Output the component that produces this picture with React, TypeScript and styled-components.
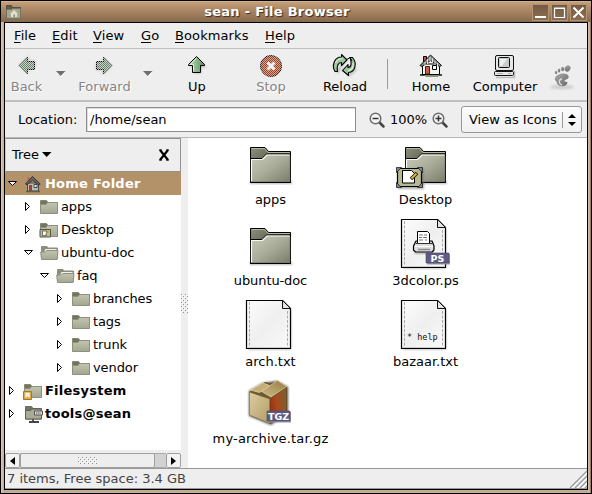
import React from "react";
import styled, { createGlobalStyle } from "styled-components";

const Global = createGlobalStyle`
  * { box-sizing: border-box; }
  html, body { margin: 0; padding: 0; overflow: hidden; }
  body { font: 13px/16px "DejaVu Sans", sans-serif; color: #000; }
  svg { display: block; flex: none; overflow: visible; }
`;

const Window = styled.div`
  width: 592px; height: 494px;
  display: flex; flex-direction: column;
  border: 1px solid #000;
  background: linear-gradient(90deg, #e3cbb6 0, #cdb299 2px, #c9ae93 3px, transparent 3px calc(100% - 3px), #d5bda6 calc(100% - 3px), #c5a88a calc(100% - 1px), #6d5338 100%), #c3ab90;
`;
const TitleBar = styled.header`
  height: 21px; flex: none;
  display: flex; align-items: center;
  padding: 1px 4px 0 5px;
  background: linear-gradient(#e2bf9c 0, #c49f7a 1px, #b6926e 5px, #977556 16px, #856a4d 21px);
`;
const Title = styled.h1`
  flex: 1; margin: 0; padding: 0;
  font-size: 13px; line-height: 18px; font-weight: bold; text-align: center; letter-spacing: .27px;
  color: #fff; text-shadow: 1px 1px 1px #3b2a1a;
`;
const Controls = styled.div` display: flex; gap: 2px; `;
const ControlButton = styled.button`
  width: 17px; height: 17px; padding: 0; display: grid; place-items: center;
  border: 1px solid #b39472; background: linear-gradient(#745b43, #8b6e51);
`;
const Client = styled.div`
  flex: 1; min-height: 0; margin: 0 3px 3px 3px;
  border: 1px solid #000;
  display: flex; flex-direction: column;
  background: #eee;
`;
const MenuBar = styled.nav`
  height: 26px; flex: none; display: flex; align-items: center;
  padding: 0 0 0 9px; gap: 16px; border-bottom: 1px solid #bebebe;
`;
const MenuItem = styled.span<{ $w: number }>`
  width: ${p => p.$w}px; white-space: nowrap; letter-spacing: .1px;
`;
const Mnemonic = styled.span` text-decoration: underline 1px; text-underline-offset: 2px; `;
const ToolBar = styled.div`
  height: 53px; flex: none; display: flex; border-bottom: 2px solid #bfbfbf;
`;
const Tool = styled.div<{ $w: number; $off?: boolean }>`
  width: ${p => p.$w}px; flex: none;
  display: flex; flex-direction: column; align-items: center;
  padding-top: 4px; white-space: nowrap;
  color: ${p => (p.$off ? "#858585" : "#000")};
  text-shadow: ${p => (p.$off ? "1px 1px 0 #fff" : "none")};
`;
const ToolLabel = styled.span` margin-top: 1px; `;
const DropCell = styled.div<{ $w: number }>`
  width: ${p => p.$w}px; flex: none; display: flex; justify-content: center; padding-top: 22px;
`;
const Separator = styled.div`
  width: 1px; height: 30px; margin: 10px 6px 0 5px; background: #9b9b9b;
`;
const Throbber = styled.div` width: 40px; padding-top: 15px; display: flex; justify-content: center; `;

const LocationBar = styled.div`
  height: 36px; flex: none; display: flex; align-items: center;
  padding-left: 13px; border-bottom: 1px solid #b8b8b8;
`;
const LocationLabel = styled.label` width: 68px; `;
const LocationInput = styled.div`
  width: 270px; height: 25px; margin-right: 13px; padding: 0 3px; line-height: 23px;
  background: #fff; border: 1px solid #8e8e8e; box-shadow: inset 1px 1px 0 #ddd;
`;
const ZoomText = styled.span` width: 37px; margin: 0 5px; white-space: nowrap; `;
const ViewSelect = styled.div`
  width: 121px; height: 27px; margin-left: 13px; padding-left: 7px;
  display: flex; align-items: center; white-space: nowrap;
  border: 1px solid #989898; border-radius: 3px; background: linear-gradient(#fcfcfc, #f1f1f1);
`;
const SelectText = styled.span` width: 93px; `;
const SelectRule = styled.i` width: 1px; height: 16px; background: #999; margin-right: 5px; `;

const Content = styled.div` flex: 1; min-height: 0; display: flex; `;
const SidePane = styled.aside`
  width: 176px; flex: none; display: flex; flex-direction: column; background: #fff;
`;
const PaneHeader = styled.div`
  height: 34px; flex: none; display: flex; align-items: center;
  padding: 0 10px 0 6px; background: #eee;
  border: 1px solid #929292; border-left-color: #c8c8c8;
`;
const PaneTitle = styled.span` margin-right: 3px; `;
const Spacer = styled.span` flex: 1; `;
const Tree = styled.div` flex: 1; `;
const TreeRow = styled.div<{ $depth: number; $selected?: boolean; $bold?: boolean }>`
  height: 23px; display: flex; align-items: center; white-space: nowrap;
  padding-left: ${p => 2 + p.$depth * 16}px;
  background: ${p => (p.$selected ? "#b39169" : "transparent")};
  color: ${p => (p.$selected ? "#fff" : "#000")};
  font-weight: ${p => (p.$bold ? "bold" : "normal")};
  letter-spacing: ${p => (p.$bold ? ".24px" : "-.1px")};
`;
const TreeIcon = styled.span` width: 20px; margin: 0 1px 0 6px; `;
const ScrollBar = styled.div`
  height: 18px; flex: none; padding-top: 3px; display: flex; background: #eee;
`;
const ScrollButton = styled.div`
  width: 15px; height: 15px; display: grid; place-items: center;
  border: 1px solid #a0a0a0; border-radius: 2px; background: #f3f3f3;
`;
const ScrollTrack = styled.div`
  flex: 1; background: #d2d2d2; border: solid #aaa; border-width: 1px 0;
`;
const ScrollThumb = styled.div`
  width: 135px; height: 15px; margin-top: -1px; display: grid; place-items: center;
  border: 1px solid #a0a0a0; border-radius: 2px; background: #eee;
`;
const Divider = styled.div`
  width: 7px; display: flex; align-items: center; justify-content: center; background: #eee;
`;
const Files = styled.main`
  flex: 1; background: #fff; padding-left: 5px;
  display: grid; grid-template-columns: 155px 155px; grid-template-rows: 81px 81px 77px 77px;
`;
const FileItem = styled.figure`
  margin: 0; display: flex; flex-direction: column; align-items: center; white-space: nowrap;
`;
const FileName = styled.figcaption<{ $track: number }>`
  line-height: 17px; letter-spacing: ${p => p.$track}px;
`;
const StatusBar = styled.footer`
  height: 21px; flex: none; display: flex; justify-content: space-between; align-items: center;
  padding-left: 2px; color: #444; border: solid #999; border-width: 1px 0;
`;
const Resources = styled.svg` position: absolute; `;

const Defs = () => (
  <Resources width="0" height="0">
    <defs>
      <linearGradient id="front" x1="0" y1="0" x2="1" y2="1">
        <stop offset="0" stopColor="#cbcdb9" /><stop offset=".5" stopColor="#a9ac98" /><stop offset="1" stopColor="#797b68" />
      </linearGradient>
      <linearGradient id="tab" x1="0" y1="0" x2=".6" y2=".6">
        <stop offset="0" stopColor="#8e917c" /><stop offset="1" stopColor="#4c4e3c" />
      </linearGradient>
      <linearGradient id="small" x1="0" y1="0" x2="0" y2="1">
        <stop offset="0" stopColor="#c3c5b0" /><stop offset="1" stopColor="#a3a691" />
      </linearGradient>
      <linearGradient id="green" x1="0" y1="0" x2="1" y2="0">
        <stop offset="0" stopColor="#b9deb8" /><stop offset="1" stopColor="#5e8e60" />
      </linearGradient>
      <linearGradient id="paper" x1="0" y1="0" x2="1" y2="1">
        <stop offset="0" stopColor="#fdfdfd" /><stop offset=".5" stopColor="#efefef" /><stop offset="1" stopColor="#fafafa" />
      </linearGradient>
      <linearGradient id="boxL" x1="0" y1="0" x2="1" y2="1">
        <stop offset="0" stopColor="#dccda0" /><stop offset="1" stopColor="#b29c65" />
      </linearGradient>
      <linearGradient id="boxR" x1="0" y1=".6" x2="1" y2=".2">
        <stop offset="0" stopColor="#9c2f10" /><stop offset=".4" stopColor="#a84a1c" /><stop offset="1" stopColor="#7a6030" />
      </linearGradient>
      <linearGradient id="flap" x1="0" y1="1" x2=".8" y2="0">
        <stop offset="0" stopColor="#d0bd88" /><stop offset="1" stopColor="#9a8148" />
      </linearGradient>
      <linearGradient id="foot" x1="0" y1="0" x2="1" y2="1">
        <stop offset="0" stopColor="#aaa" /><stop offset="1" stopColor="#686868" />
      </linearGradient>
      <pattern id="dither" width="2" height="2" patternUnits="userSpaceOnUse">
        <path d="M0 0h1v1H0zM1 1h1v1H1z" fill="#ededed" />
      </pattern>
      <pattern id="grip" width="4" height="4" patternUnits="userSpaceOnUse">
        <path d="M0 0h1v1H0zM2 2h1v1H2z" fill="#909090" /><path d="M1 1h1v1H1zM3 3h1v1H3z" fill="#fff" />
      </pattern>
      <filter id="soft" x="-30%" y="-30%" width="160%" height="160%"><feGaussianBlur stdDeviation="1" /></filter>
    </defs>
  </Resources>
);

const Arrow = ({ turn, off }: { turn: number; off?: boolean }) => (
  <svg width={off ? 25 : 26} height="25" viewBox={off ? "0 0 25 25" : "0 1 26 25"}>
    <g transform={`rotate(${turn} 12.5 12.5)`}>
      <path d="M13.5 5.5 21.5 13.5V15.5H17.5V21.5H10.5V15.5H5.5z" fill="#999" opacity=".5" filter="url(#soft)" />
      <path d="M12.5 4.5 20.5 12.500V13.500H16.500V20.500H8.500V13.500H4.500V12.500z" fill={off ? "#66806a" : "url(#green)"} stroke="#000" />
      {!off && <path d="M12.500 6 6.500 12.500H9.500V19.500" fill="none" stroke="#dcf0d9" />}
    </g>
    {off && <path d="M3 3H22V22H3z" fill="url(#dither)" opacity=".75" />}
  </svg>
);
const StopIcon = () => (
  <svg width="26" height="25" viewBox="0 0 26 25">
    <circle cx="13" cy="13" r="10.500" fill="#a83f1c" stroke="#111" />
    <path d="M1 1h24v24H1z" fill="url(#dither)" opacity=".6" />
    <path d="m9.500 9.500 7 7M16.500 9.500l-7 7" stroke="#f2f2f2" strokeWidth="3" />
  </svg>
);
const ReloadIcon = () => (
  <svg width="26" height="25" viewBox="0 0 26 25">
    <path d="M5 20 12 9M16 23 24 16" stroke="#999" strokeWidth="3" opacity=".5" filter="url(#soft)" />
    <g stroke="#000" strokeWidth="1.1" fill="#9cc79b" strokeLinejoin="round">
      <path d="M5.500 18.500H3C-.5 13 2 4 9.500 4V1.500L15 7 9.500 12.500V9.500C6 9.500 4.500 13 5.500 18.500z" />
      <path d="M18 4.500h2.500c4.500 5 3.500 14.500-4 15V22.500L10.500 17.500 16 11.500v3c3.500 0 4-5 2-10z" />
      <path d="M3.500 10C4.500 7.500 7 5.500 10.500 5.500M21 10c.5 4-1.500 7-5 8" stroke="#e1f3df" fill="none" />
    </g>
    <path d="m14 7 4-2.500L20 8" stroke="#000" fill="none" />
  </svg>
);
const HomeIcon = () => (
  <svg width="26" height="25" viewBox="0 0 26 25">
    <path d="M2 22H24" stroke="#3f5535" strokeWidth="2" /><path d="M5 21l3 3h12l2-3" fill="#859675" />
    <path d="M5.500 3.500h3V9h-3z" fill="#bd5540" stroke="#000" />
    <path d="M4.500 11h17v10.500h-17z" fill="#f4f4f4" stroke="#000" />
    <path d="M12.500 2 2 12.500l2 1 8.500-6 9 6 2-1z" fill="#888" stroke="#111" />
    <path d="M12 4v4M9.500 6v5M7 9v3M14.500 5v5M17 8v4M19.500 10v3" stroke="#e0e0e0" />
    <path d="M7.500 13.500h4V21h-4z" fill="#c85f48" stroke="#3b211b" /><path d="M14.500 12.500h4v4h-4z" fill="#fff" stroke="#000" />
  </svg>
);
const ComputerIcon = () => (
  <svg width="26" height="25" viewBox="0 0 26 25">
    <path d="M4 24.500H22.500V18" stroke="#bbb" strokeWidth="1.500" fill="none" />
    <rect x="3.500" y="2.500" width="18" height="15" rx="1.500" fill="#e8e8e6" stroke="#111" />
    <rect x="6.500" y="4.500" width="11" height="10" rx="1" fill="#c8cccd" stroke="#111" />
    <path d="M8 6h7l-5 7H8z" fill="#eef0f1" />
    <rect x="2.500" y="18.500" width="19" height="4" rx="1" fill="#e7e7e5" stroke="#111" />
    <path d="M5 20.500h6M16 20.500h3" stroke="#aaa" />
  </svg>
);
const FootIcon = () => (
  <svg width="26" height="26" viewBox="0 0 26 26">
    <ellipse cx="13" cy="23" rx="12" ry="2.500" fill="#d0d0d0" filter="url(#soft)" />
    <g fill="url(#foot)">
      <ellipse cx="18.500" cy="4.500" rx="2.700" ry="3.300" transform="rotate(40 18.500 4.500)" />
      <ellipse cx="13.500" cy="5" rx="1.500" ry="2.200" /><ellipse cx="10" cy="6.500" rx="1.300" ry="2" /><ellipse cx="7" cy="8.500" rx="1.200" ry="1.700" />
      <path d="M6 14C8 9 18 8 19.500 12c1 4-4 3-4 5 0 1 3 0 3 2-1 4-9.500 5-11-1-1-2-2.500-2-1.500-4z" />
    </g>
    <path d="M13 15c-3 0-4 5 0 6" stroke="#ddd" strokeWidth="1.300" fill="none" />
  </svg>
);
const Magnifier = ({ plus }: { plus?: boolean }) => (
  <svg width="16" height="16" viewBox="0 0 16 16">
    <path d="m10.500 10.500 4 4" stroke="#444" strokeWidth="2.500" strokeLinecap="round" />
    <circle cx="6.500" cy="6.500" r="5.300" fill="#f5f5f5" stroke="#6d6d6d" strokeWidth="1.500" />
    <path d={plus ? "M3.500 6.500h6M6.500 3.500v6" : "M3.500 6.500h6"} stroke="#333" strokeWidth="1.500" />
  </svg>
);
const Drop = () => (
  <svg width="10" height="6"><path d="M1 1h9L5.500 6z" fill="#fff" /><path d="M0 0h9.500L4.700 5z" fill="#6f6f6f" /></svg>
);

const Expander = ({ open }: { open?: boolean }) => (
  <svg width="11" height="11" viewBox="0 0 11 11">
    <path d={open ? "M1.500 3.500h8L5.500 7.500z" : "M2.500 1.500v8L6.500 5.500z"} fill="#fff" stroke="#000" />
  </svg>
);

type Kind = "home" | "folder" | "desktop" | "open" | "disk" | "server";
const SmallIcon = ({ kind }: { kind: Kind }) => {
  if (kind === "home")
    return (
      <svg width="18" height="18" viewBox="0 0 18 18">
        <path d="M3.500 2h2v4h-2z" fill="#d35f51" /><path d="M3.500 8h11v8h-11z" fill="#b9b9b5" stroke="#4b4b44" />
        <path d="M8.500 1.500 1.500 9l1.500.8 5.500-4.500 6 4.500 1.700-.8z" fill="#666" stroke="#34342e" />
        <path d="M5 10h3v6H5z" fill="#a63c33" /><path d="M10 9.500h3v3h-3z" fill="#eee" stroke="#444" />
        <path d="M2 16.500h14" stroke="#596149" strokeWidth="1.500" />
      </svg>
    );
  if (kind === "open")
    return (
      <svg width="19" height="18" viewBox="0 0 19 18">
        <path d="M1.500 14V2.500h5.500l1 1.500h9.500v10z" fill="#8b8d79" stroke="#8b8d79" />
        <path d="M5.500 5h11v3H4z" fill="#f1f1ed" />
        <path d="M.7 8h4.500l1.500-1.500h11.300l-.8 9H1.500z" fill="url(#small)" stroke="#8f917c" />
      </svg>
    );
  if (kind === "server")
    return (
      <svg width="19" height="18" viewBox="0 0 19 18">
        <path d="M5 17h10M9 14v3" stroke="#444" strokeWidth="1.800" />
        <path d="M1.500 14V1.500h6L9 3.500h8.500V14z" fill="#73755f" stroke="#6b6d59" />
        <path d="M1.500 5.500h5l1.500-1.500h9.500V14h-16z" fill="#a9ab97" stroke="#5c5e4c" />
        <path d="M10.500 6h8v4h-8z" fill="#ddd" stroke="#555" /><path d="M12 8h5" stroke="#555" strokeDasharray="1.500 .7" />
      </svg>
    );
  return (
    <svg width="19" height="18" viewBox="0 0 19 18">
      <path d="M.5 15V2.500h6l1.500 2h9.500v10.500z" fill="#73755f" stroke="#85876f" />
      <path d="M.5 6.500h5.500l1.500-2h10v11h-17z" fill="url(#small)" stroke="#8e907b" />
      {kind === "desktop" && <g><path d="M0 8.500h10.500v7.500H0z" fill="#b9bc9a" stroke="#555745" /><path d="M2.500 10h4v4.500h-4z" fill="#fff" stroke="#444" strokeWidth=".7" /><path d="m5.500 13.500 3-3.500" stroke="#c59b28" strokeWidth="1.300" /></g>}
      {kind === "disk" && <g><path d="M-.5 9.500h8v8h-8z" fill="#e3a63d" stroke="#a9772b" /><path d="M2 15.500v-4h3v4M2 13.500h3" fill="none" stroke="#fff" strokeWidth="1.300" /></g>}
    </svg>
  );
};

const FolderArt = () => (
  <g>
    <path d="M7 43h42v3H7z" fill="#888" filter="url(#soft)" opacity=".6" />
    <path d="M7.500 44.500v-35h14.500l3.500 4h22v31z" fill="url(#tab)" stroke="#000" strokeLinejoin="round" />
    <path d="M8.500 10.500h13l3.500 4h22" fill="none" stroke="#b6b8a5" />
    <path d="M7.500 20.500H19l4.500-4.500h24v28.500h-40z" fill="url(#front)" stroke="#000" strokeLinejoin="round" />
    <path d="M8.500 43V21.500h11L24 17h22.500" fill="none" stroke="#fafaf4" strokeWidth="1.200" />
    <path d="M9 43.500h38V18" fill="none" stroke="#6d6f5d" opacity=".5" />
  </g>
);
const PaperArt = () => (
  <g>
    <path d="M5 10h43v39.500H5z" fill="#777" filter="url(#soft)" opacity=".55" />
    <path d="M3.500.5h36l8 8v40h-44z" fill="url(#paper)" stroke="#000" strokeWidth="1.200" strokeLinejoin="round" />
    <path d="M6.500 2v46M44.500 11v37" stroke="#aaa" strokeDasharray="3 1.500" />
    <path d="M4.500 47.500h42" stroke="#ccc" />
    <path d="M39.500.5V8.500h8z" fill="#e4e4e4" stroke="#111" strokeLinejoin="round" />
  </g>
);
const TypeBadge = ({ x, text }: { x: number; text: string }) => (
  <g>
    <path d={`M${x + 1} 35h23v10.500h-23z`} fill="#999" />
    <path d={`M${x} 34h23v10h-23z`} fill="#605b86" stroke="#4b466d" strokeWidth=".6" />
    <text x={x + 11.500} y="42.500" textAnchor="middle" fontSize="9.500" fontWeight="bold" fill="#fff">{text}</text>
  </g>
);
const FileArt = ({ kind }: { kind: string }) => (
  <svg width="55" height="53" viewBox="0 0 55 53">
    {(kind === "folder" || kind === "desktop") && <FolderArt />}
    {kind === "desktop" && (
      <g>
        <path d="M0 31h26v20H0z" fill="#777" filter="url(#soft)" opacity=".6" />
        <path d="M-.5 30.500h24v18h-24z" fill="#b5b891" stroke="#000" strokeWidth="1.200" />
        <path d="M-1.500 29.500h5l-5 5zM24.500 29.500h-5l5 5zM-1.500 49.500h5l-5-5zM24.500 49.500h-5l5-5z" fill="#77839c" stroke="#222" strokeWidth=".8" />
        <path d="M4.500 32.500h9l3 3v9.500h-12z" fill="#fff" stroke="#000" />
        <path d="m13 41 6-6" stroke="#111" strokeWidth="3.500" /><path d="m13.500 40.500 5-5" stroke="#e3b334" strokeWidth="2" />
      </g>
    )}
    {(kind === "ps" || kind === "text" || kind === "help") && <PaperArt />}
    {kind === "help" && <text x="9" y="39.500" fontFamily="DejaVu Sans Mono" fontSize="8.500" fill="#111">* help</text>}
    {kind === "ps" && (
      <g strokeLinejoin="round">
        <path d="M17 33h19v2H17z" fill="#aaa" filter="url(#soft)" />
        <path d="M18 22h16l2 5v4l-2 2H17.500l-2-2v-4z" fill="#ddd" stroke="#000" strokeWidth="1.200" />
        <path d="M19.500 24.500v-12h10l2 2v10z" fill="#fff" stroke="#000" />
        <path d="M21 16h4M26 16h3M21 18.500h3M25 18.500h4M21 21h4M27 21h2" stroke="#777" />
        <path d="M18 24.500h16" stroke="#333" /><path d="M17 27.500h18" stroke="#fff" /><path d="M20 30.500h12" stroke="#888" strokeWidth="1.500" />
        <TypeBadge x={28} text="PS" />
      </g>
    )}
    {kind === "tgz" && (
      <g strokeLinejoin="round">
        <path d="M6 14 20 6l14-2 11 6v26L28 48 6 39z" fill="#222" filter="url(#soft)" opacity=".8" />
        <path d="M6.500 15 27 22V46.500L6.500 38z" fill="url(#boxL)" stroke="#8b7745" strokeWidth=".7" />
        <path d="M27 22 43.500 10v25.500L27 46.500z" fill="url(#boxR)" stroke="#684819" strokeWidth=".7" />
        <path d="M6.500 15 22 5l21.500 5L27 22z" fill="#6e5a2c" />
        <path d="m7.500 13 12-7 7 2.500-10 7z" fill="#c3ae78" stroke="#ecdfb6" strokeWidth=".7" />
        <path d="m18.500 14.500 16-11 9 6L28 20z" fill="url(#flap)" stroke="#e0d0a0" strokeWidth=".7" />
        <TypeBadge x={24} text="TGZ" />
      </g>
    )}
  </svg>
);

const rows: { d: number; t: string; k: Kind; open?: boolean; bold?: boolean; sel?: boolean }[] = [
  { d: 0, t: "Home Folder", k: "home", open: true, bold: true, sel: true },
  { d: 1, t: "apps", k: "folder" },
  { d: 1, t: "Desktop", k: "desktop" },
  { d: 1, t: "ubuntu-doc", k: "open", open: true },
  { d: 2, t: "faq", k: "open", open: true },
  { d: 3, t: "branches", k: "folder" },
  { d: 3, t: "tags", k: "folder" },
  { d: 3, t: "trunk", k: "folder" },
  { d: 3, t: "vendor", k: "folder" },
  { d: 0, t: "Filesystem", k: "disk", bold: true },
  { d: 0, t: "tools@sean", k: "server", bold: true },
];
const files: [string, string, number][] = [
  ["apps", "folder", 0], ["Desktop", "desktop", 0], ["ubuntu-doc", "folder", -0.1], ["3dcolor.ps", "ps", 0],
  ["arch.txt", "text", 0], ["bazaar.txt", "help", 0], ["my-archive.tar.gz", "tgz", 0.16],
];
const menus: [string, number][] = [["File", 22], ["Edit", 25], ["View", 32], ["Go", 18], ["Bookmarks", 74], ["Help", 30]];

export default function App() {
  return (
    <Window>
      <Global />
      <Defs />
      <TitleBar>
        <svg width="16" height="15" viewBox="0 0 16 15">
          <path d="M.5 13.500V.5h5l1 2h8v11z" fill="#5c5d49" stroke="#51513f" />
          <path d="M.5 4.500h5l1-1h8v10H.5z" fill="#a6a791" stroke="#72735c" />
          <path d="m8 5-4 4h1v3h6V9h1z" fill="#dfe0cd" /><path d="M7.500 9.500h1.500V12H7.500z" fill="#888971" />
        </svg>
        <Title>sean - File Browser</Title>
        <Controls>
          <ControlButton aria-label="Minimize"><svg width="13" height="13"><path d="M1 11h11" stroke="#fff" strokeWidth="2" /></svg></ControlButton>
          <ControlButton aria-label="Maximize"><svg width="13" height="13"><path d="M1.500 2.500h10v9h-10zM1 2h11" stroke="#fff" strokeWidth="1.200" fill="none" /></svg></ControlButton>
          <ControlButton aria-label="Close"><svg width="13" height="13"><path d="m1.500 1.500 10 10M11.500 1.500l-10 10" stroke="#fff" strokeWidth="2" /></svg></ControlButton>
        </Controls>
      </TitleBar>
      <Client>
        <MenuBar>
          {menus.map(([m, w]) => <MenuItem key={m} $w={w}><Mnemonic>{m[0]}</Mnemonic>{m.slice(1)}</MenuItem>)}
        </MenuBar>
        <ToolBar>
          <Tool $w={43} $off><Arrow turn={-90} off /><ToolLabel>Back</ToolLabel></Tool>
          <DropCell $w={25}><Drop /></DropCell>
          <Tool $w={63} $off><Arrow turn={90} off /><ToolLabel>Forward</ToolLabel></Tool>
          <DropCell $w={24}><Drop /></DropCell>
          <Tool $w={74}><Arrow turn={0} /><ToolLabel>Up</ToolLabel></Tool>
          <Tool $w={74} $off><StopIcon /><ToolLabel>Stop</ToolLabel></Tool>
          <Tool $w={74}><ReloadIcon /><ToolLabel>Reload</ToolLabel></Tool>
          <Separator />
          <Tool $w={74}><HomeIcon /><ToolLabel>Home</ToolLabel></Tool>
          <Tool $w={74}><ComputerIcon /><ToolLabel>Computer</ToolLabel></Tool>
          <Throbber><FootIcon /></Throbber>
        </ToolBar>
        <LocationBar>
          <LocationLabel>Location:</LocationLabel>
          <LocationInput>/home/sean</LocationInput>
          <Magnifier />
          <ZoomText>100%</ZoomText>
          <Magnifier plus />
          <ViewSelect>
            <SelectText>View as Icons</SelectText>
            <SelectRule />
            <svg width="8" height="12"><path d="M0 4h8L4 0zM0 8h8l-4 4z" /></svg>
          </ViewSelect>
        </LocationBar>
        <Content>
          <SidePane>
            <PaneHeader>
              <PaneTitle>Tree</PaneTitle>
              <svg width="10" height="6"><path d="M0 0h9.500L4.700 5z" /></svg>
              <Spacer />
              <svg width="12" height="12"><path d="m2 1 8 10M10 1 2 11" stroke="#000" strokeWidth="2.200" /><path d="M1 1h3M8 1h3M1 11h3M8 11h3" stroke="#000" /></svg>
            </PaneHeader>
            <Tree>
              {rows.map(r => (
                <TreeRow key={r.t} $depth={r.d} $selected={r.sel} $bold={r.bold}>
                  <Expander open={r.open} />
                  <TreeIcon><SmallIcon kind={r.k} /></TreeIcon>
                  {r.t}
                </TreeRow>
              ))}
            </Tree>
            <ScrollBar>
              <ScrollButton><svg width="5" height="8"><path d="M5 0v8L0 4z" /></svg></ScrollButton>
              <ScrollTrack>
                <ScrollThumb><svg width="19" height="7"><path d="M0 0h19v7H0z" fill="url(#grip)" /></svg></ScrollThumb>
              </ScrollTrack>
              <ScrollButton><svg width="5" height="8"><path d="M0 0v8l5-4z" /></svg></ScrollButton>
            </ScrollBar>
          </SidePane>
          <Divider><svg width="7" height="19"><path d="M0 0h7v19H0z" fill="url(#grip)" /></svg></Divider>
          <Files>
            {files.map(([name, kind, track]) => (
              <FileItem key={name}><FileArt kind={kind} /><FileName $track={track}>{name}</FileName></FileItem>
            ))}
          </Files>
        </Content>
        <StatusBar>
          <span>7 items, Free space: 3.4 GB</span>
          <svg width="18" height="19"><path d="M1 19 18 2M6 19 18 7M11 19l7-7M16 19l2-2" stroke="#999" strokeWidth="1.300" /><path d="M3 19 18 4M8 19 18 9M13 19l5-5" stroke="#fff" /></svg>
        </StatusBar>
      </Client>
    </Window>
  );
}
